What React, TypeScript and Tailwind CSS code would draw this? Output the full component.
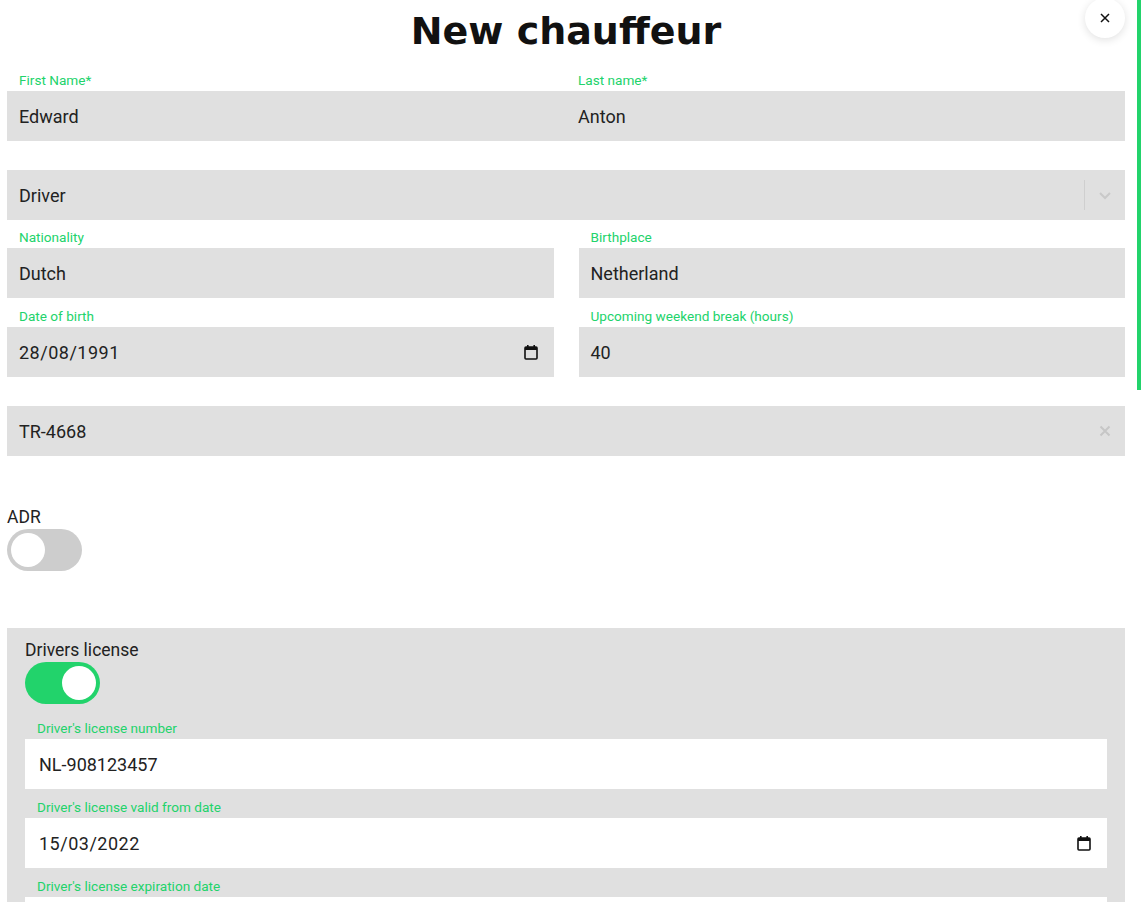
import React from 'react';

const Label: React.FC<{ text?: string; h?: string }> = ({ text, h = 'h-[29px]' }) => (
  <div className={`${h} flex items-end pb-[3px] px-[12px]`}>
    {text && <span className="text-[13.6px] leading-4 text-[#22d36b]">{text}</span>}
  </div>
);

const CalendarIcon = () => (
  <svg width="14" height="16" viewBox="0 0 14 16" fill="none">
    <rect x="1" y="3" width="12" height="12" rx="1" stroke="#111" strokeWidth="1.6" />
    <rect x="1" y="3" width="12" height="3" fill="#111" />
    <rect x="3" y="1" width="1.6" height="3" fill="#111" />
    <rect x="9.4" y="1" width="1.6" height="3" fill="#111" />
  </svg>
);

const Field: React.FC<{
  label?: string;
  value: string;
  white?: boolean;
  date?: boolean;
  slot?: string;
  right?: React.ReactNode;
}> = ({ label, value, white, date, slot, right }) => (
  <div className="flex flex-col">
    <Label text={label} h={slot} />
    <div
      className={`h-[50px] flex items-center text-[18px] text-[#222] ${white ? 'bg-white pl-[14px] pr-[12px]' : 'bg-[#e0e0e0] px-[12px]'} ${date ? 'tracking-[0.5px]' : ''}`}
    >
      <span className="flex-1">{value}</span>
      {date && <span className="mr-[4px] flex items-center"><CalendarIcon /></span>}
      {right}
    </div>
  </div>
);

const Toggle: React.FC<{ on: boolean }> = ({ on }) => (
  <div className={`w-[75px] h-[42px] rounded-full p-[4px] flex ${on ? 'bg-[#22d36b] justify-end' : 'bg-[#cdcdcd] justify-start'}`}>
    <div className="w-[34px] h-[34px] rounded-full bg-white" />
  </div>
);

export default function App() {
  return (
    <div className="relative flex h-[902px] overflow-hidden bg-white" style={{ fontFamily: 'Roboto, "Liberation Sans", sans-serif' }}>
      <div className="flex-1 pl-[7px] pr-[12px]">
        <div className="h-[62px] flex items-center justify-center">
          <h1 className="text-[38px] leading-[60px] font-bold text-[#111]" style={{ fontFamily: '"DejaVu Sans", sans-serif' }}>
            New chauffeur
          </h1>
        </div>

        <div className="grid grid-cols-2">
          <Field label="First Name*" value="Edward" />
          <Field label="Last name*" value="Anton" />
        </div>

        <Field
          value="Driver"
          right={
            <div className="flex items-center h-[30px]">
              <div className="w-px h-[30px] bg-[#cfcfcf]" />
              <svg className="ml-[13px] mr-[1px]" width="14" height="10" viewBox="0 0 14 10" fill="none">
                <path d="M2 3l5 5 5-5" stroke="#c9c9c9" strokeWidth="2" />
              </svg>
            </div>
          }
        />

        <div className="grid grid-cols-2 gap-x-[25px]">
          <Field label="Nationality" value="Dutch" slot="h-[28px]" />
          <Field label="Birthplace" value="Netherland" slot="h-[28px]" />
        </div>

        <div className="grid grid-cols-2 gap-x-[25px]">
          <Field label="Date of birth" value="28/08/1991" date />
          <Field label="Upcoming weekend break (hours)" value="40" />
        </div>

        <Field
          value="TR-4668"
          right={
            <svg className="mr-[2px]" width="12" height="12" viewBox="0 0 12 12" fill="none">
              <path d="M1.5 1.5l9 9M10.5 1.5l-9 9" stroke="#c6c6c6" strokeWidth="2" />
            </svg>
          }
        />

        <div className="mt-[51px]">
          <div className="text-[17.5px] leading-5 text-[#222]">ADR</div>
          <div className="mt-[2px]">
            <Toggle on={false} />
          </div>
        </div>

        <div className="mt-[57px] bg-[#e0e0e0] px-[18px] pt-[12px] pb-[20px]">
          <div className="text-[17.5px] leading-5 text-[#222]">Drivers license</div>
          <div className="mt-[2px]">
            <Toggle on />
          </div>
          <Field label="Driver's license number" value="NL-908123457" white slot="h-[35px]" />
          <Field label="Driver's license valid from date" value="15/03/2022" white date />
          <Field label="Driver's license expiration date" value="" white />
        </div>
      </div>

      <div className="w-[5px] shrink-0">
        <div className="h-[390px] w-[4px] bg-[#22d36b]" />
      </div>

      <button className="absolute top-[-2px] right-[17px] w-[40px] h-[40px] rounded-full bg-white shadow-[0_2px_8px_rgba(0,0,0,0.12)] flex items-center justify-center">
        <svg width="10" height="10" viewBox="0 0 10 10" fill="none">
          <path d="M1 1l8 8M9 1l-8 8" stroke="#111" strokeWidth="1.5" />
        </svg>
      </button>
    </div>
  );
}
